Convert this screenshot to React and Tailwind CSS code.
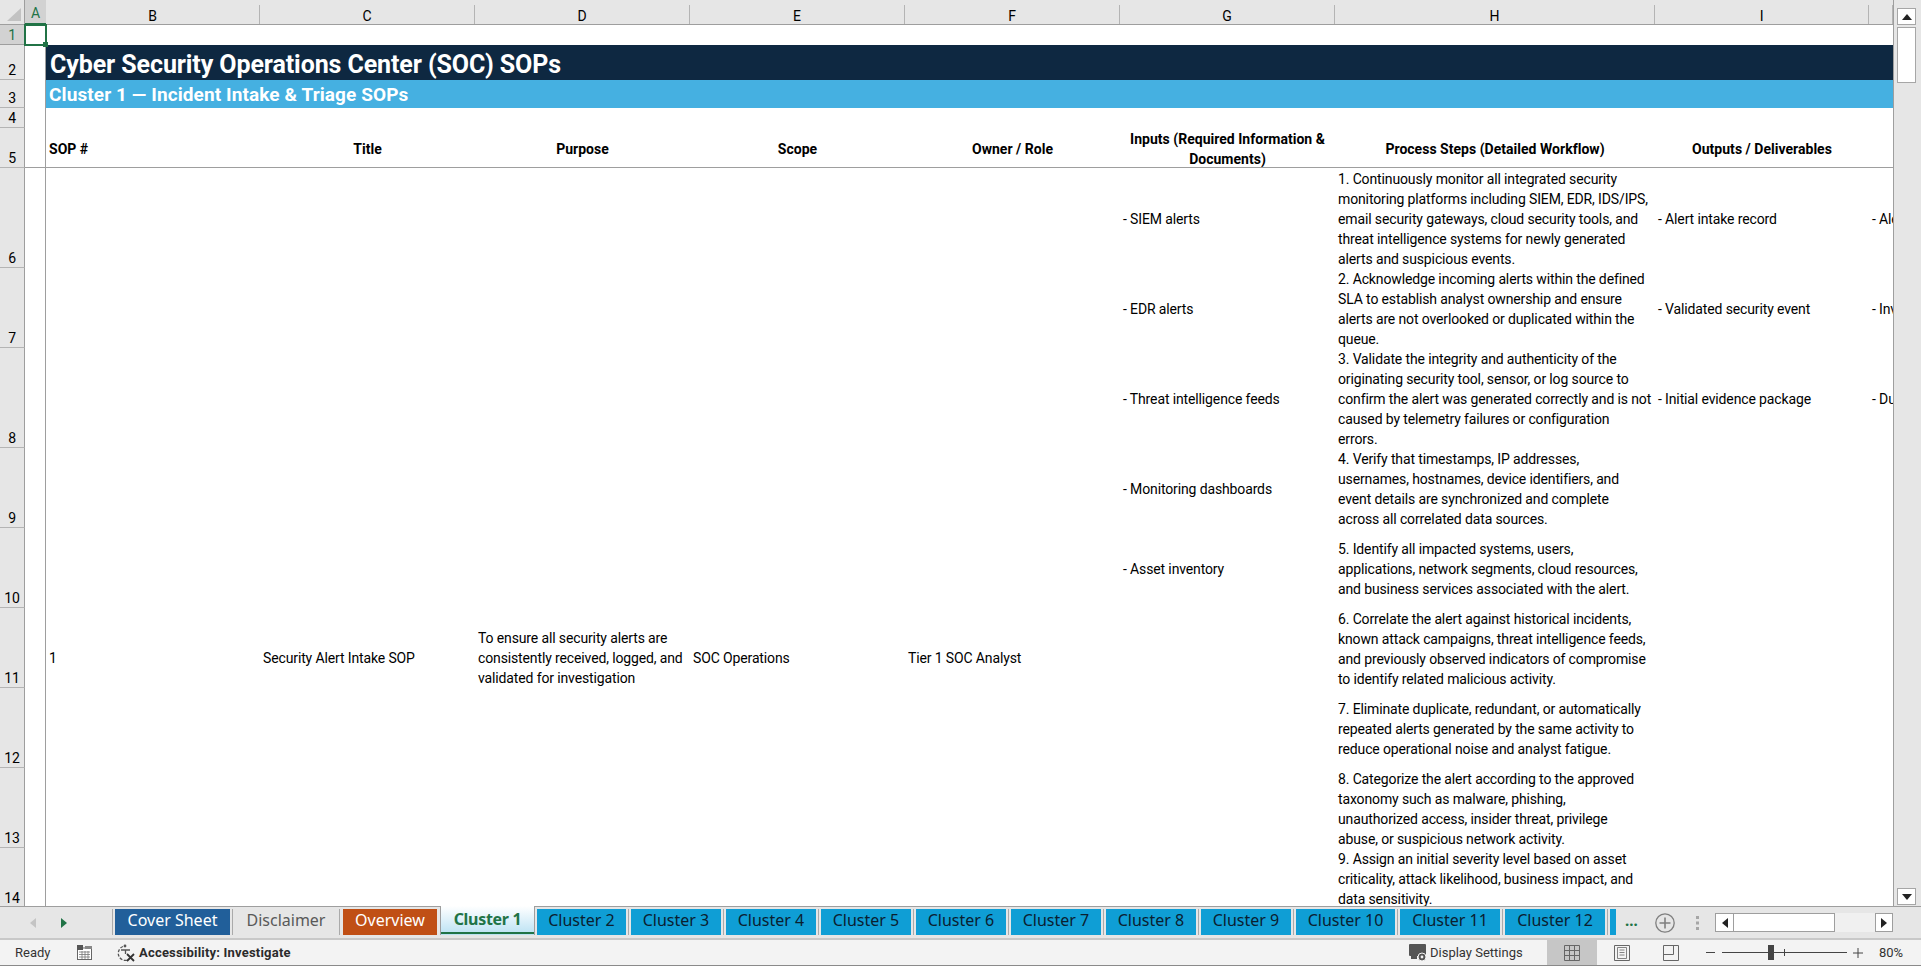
import React from 'react';

const CELL_FONT = "font-['Roboto',sans-serif] text-[14px] leading-[20px] tracking-[-0.13px] text-black";
const TAB_FONT = "font-['Noto_Sans',sans-serif] text-[16px] leading-[22px]";
const UI_FONT = "font-['Roboto',sans-serif] text-[13px]";

// Column header cells
const columns = [
  { label: 'B', col: 'col-start-3' },
  { label: 'C', col: 'col-start-4' },
  { label: 'D', col: 'col-start-5' },
  { label: 'E', col: 'col-start-6' },
  { label: 'F', col: 'col-start-7' },
  { label: 'G', col: 'col-start-8' },
  { label: 'H', col: 'col-start-9' },
  { label: 'I', col: 'col-start-10' },
  { label: '', col: 'col-start-11' },
];

// Row header cells
const rowLabels = [
  { label: '2', row: 'row-start-3' },
  { label: '3', row: 'row-start-4' },
  { label: '4', row: 'row-start-5' },
  { label: '5', row: 'row-start-6' },
  { label: '6', row: 'row-start-7' },
  { label: '7', row: 'row-start-8' },
  { label: '8', row: 'row-start-9' },
  { label: '9', row: 'row-start-10' },
  { label: '10', row: 'row-start-11' },
  { label: '11', row: 'row-start-12' },
  { label: '12', row: 'row-start-13' },
  { label: '13', row: 'row-start-14' },
  { label: '14', row: 'row-start-15' },
];

const headers = [
  { col: 'col-start-3', text: 'SOP #', align: 'text-left pl-[3px]' },
  { col: 'col-start-4', text: 'Title' },
  { col: 'col-start-5', text: 'Purpose' },
  { col: 'col-start-6', text: 'Scope' },
  { col: 'col-start-7', text: 'Owner / Role' },
  { col: 'col-start-8', text: 'Inputs (Required Information & Documents)' },
  { col: 'col-start-9', text: 'Process Steps (Detailed Workflow)' },
  { col: 'col-start-10', text: 'Outputs / Deliverables' },
  { col: 'col-start-11', text: '' },
];

const steps = [
  { row: 'row-start-7', lines: ['1. Continuously monitor all integrated security', 'monitoring platforms including SIEM, EDR, IDS/IPS,', 'email security gateways, cloud security tools, and', 'threat intelligence systems for newly generated', 'alerts and suspicious events.'] },
  { row: 'row-start-8', lines: ['2. Acknowledge incoming alerts within the defined', 'SLA to establish analyst ownership and ensure', 'alerts are not overlooked or duplicated within the', 'queue.'] },
  { row: 'row-start-9', lines: ['3. Validate the integrity and authenticity of the', 'originating security tool, sensor, or log source to', 'confirm the alert was generated correctly and is not', 'caused by telemetry failures or configuration', 'errors.'] },
  { row: 'row-start-10', lines: ['4. Verify that timestamps, IP addresses,', 'usernames, hostnames, device identifiers, and', 'event details are synchronized and complete', 'across all correlated data sources.'] },
  { row: 'row-start-11', lines: ['5. Identify all impacted systems, users,', 'applications, network segments, cloud resources,', 'and business services associated with the alert.'] },
  { row: 'row-start-12', lines: ['6. Correlate the alert against historical incidents,', 'known attack campaigns, threat intelligence feeds,', 'and previously observed indicators of compromise', 'to identify related malicious activity.'] },
  { row: 'row-start-13', lines: ['7. Eliminate duplicate, redundant, or automatically', 'repeated alerts generated by the same activity to', 'reduce operational noise and analyst fatigue.'] },
  { row: 'row-start-14', lines: ['8. Categorize the alert according to the approved', 'taxonomy such as malware, phishing,', 'unauthorized access, insider threat, privilege', 'abuse, or suspicious network activity.'] },
  { row: 'row-start-15', lines: ['9. Assign an initial severity level based on asset', 'criticality, attack likelihood, business impact, and', 'data sensitivity.'] },
];

const inputs = [
  { row: 'row-start-7', text: '- SIEM alerts' },
  { row: 'row-start-8', text: '- EDR alerts' },
  { row: 'row-start-9', text: '- Threat intelligence feeds' },
  { row: 'row-start-10', text: '- Monitoring dashboards' },
  { row: 'row-start-11', text: '- Asset inventory' },
];

const outputs = [
  { row: 'row-start-7', text: '- Alert intake record', next: '- Alert' },
  { row: 'row-start-8', text: '- Validated security event', next: '- Inv' },
  { row: 'row-start-9', text: '- Initial evidence package', next: '- Dup' },
];

const mergedCells = [
  { col: 'col-start-3', lines: ['1'] },
  { col: 'col-start-4', lines: ['Security Alert Intake SOP'] },
  { col: 'col-start-5', lines: ['To ensure all security alerts are', 'consistently received, logged, and', 'validated for investigation'] },
  { col: 'col-start-6', lines: ['SOC Operations'] },
  { col: 'col-start-7', lines: ['Tier 1 SOC Analyst'] },
];

const clusterTabs = [
  { name: 'Cluster 2', width: 'w-[94px]' },
  { name: 'Cluster 3', width: 'w-[95px]' },
  { name: 'Cluster 4', width: 'w-[95px]' },
  { name: 'Cluster 5', width: 'w-[95px]' },
  { name: 'Cluster 6', width: 'w-[95px]' },
  { name: 'Cluster 7', width: 'w-[95px]' },
  { name: 'Cluster 8', width: 'w-[95px]' },
  { name: 'Cluster 9', width: 'w-[95px]' },
  { name: 'Cluster 10', width: 'w-[104px]' },
  { name: 'Cluster 11', width: 'w-[105px]' },
  { name: 'Cluster 12', width: 'w-[105px]' },
];

const Sheet = () => (
  <div className="grid min-w-0 flex-1 grid-cols-[25px_21px_214px_215px_215px_215px_215px_215px_320px_214px_24px] grid-rows-[25px_20px_35px_28px_20px_40px_100px_80px_100px_80px_80px_80px_80px_80px_60px_240px] overflow-hidden">
    {/* Corner */}
    <div className="col-start-1 row-start-1 flex items-end justify-end border-r border-b border-[#9e9e9e] bg-[#e6e6e6] pr-[3px] pb-[3px]">
      <svg width="14" height="13" viewBox="0 0 14 13"><path d="M14 0V13H0Z" fill="#c2c2c2" /></svg>
    </div>

    {/* Column A header */}
    <div className="col-start-2 row-start-1 flex items-end border-b-2 border-[#217346] bg-[#e6e6e6]">
      <div className={`flex h-[23px] w-full items-center justify-center bg-[#d2d2d2] pt-[3px] ${CELL_FONT} text-[#217346]!`}>A</div>
    </div>

    {/* Column headers */}
    {columns.map(c => (
      <div key={c.col} className={`${c.col} row-start-1 flex items-end border-b border-[#9e9e9e] bg-[#e6e6e6]`}>
        <div className={`flex h-[19px] w-full items-center justify-center border-r border-[#b4b4b4] pt-[2px] ${CELL_FONT}`}>{c.label}</div>
      </div>
    ))}

    {/* Row 1 header and selected cell */}
    <div className={`col-start-1 row-start-2 flex items-end justify-center border-r border-b border-[#9e9e9e] bg-[#d2d2d2] ${CELL_FONT} leading-[18px]! text-[#217346]!`}>1</div>
    <div className="relative col-start-2 row-start-2">
      <div className="absolute -top-px -right-px -bottom-px -left-px z-10 border-2 border-[#217346]" />
      <div className="absolute -right-[2px] -bottom-[2px] z-20 h-[5px] w-[5px] bg-[#217346]" />
    </div>

    {/* Other row headers */}
    {rowLabels.map(r => (
      <div key={r.row} className={`col-start-1 ${r.row} flex items-end justify-center border-r border-b border-r-[#9e9e9e] border-b-[#b4b4b4] bg-[#e6e6e6] ${CELL_FONT} leading-[17px]!`}>{r.label}</div>
    ))}
    <div className="col-start-1 row-start-16 border-r border-[#9e9e9e] bg-[#e6e6e6]" />

    {/* Line between columns A and B */}
    <div className="col-start-2 row-start-3 row-span-3 border-r border-[#9e9e9e]" />
    <div className="col-start-2 row-start-6 border-r border-b border-[#9e9e9e]" />
    <div className="col-start-2 row-start-7 row-span-10 border-r border-[#9e9e9e]" />

    {/* Title bands */}
    <div className="col-start-3 col-end-12 row-start-3 flex items-center bg-[#0e2841] pt-[4px] pl-[4px]">
      <span className="font-['Roboto',sans-serif] text-[25px] font-bold tracking-[-0.1px] whitespace-nowrap text-white">Cyber Security Operations Center (SOC) SOPs</span>
    </div>
    <div className="col-start-3 col-end-12 row-start-4 flex items-center bg-[#45b0e1] pt-[2px] pl-[3px]">
      <span className="font-['Roboto',sans-serif] text-[19px] font-bold tracking-[0.1px] whitespace-nowrap text-white">Cluster 1 — Incident Intake &amp; Triage SOPs</span>
    </div>

    {/* Table header */}
    {headers.map(h => (
      <div key={h.col} className={`${h.col} row-start-6 flex items-center justify-center border-b border-[#9e9e9e] px-[3px] pt-[2px] ${CELL_FONT} font-bold tracking-[0.02px]! ${h.align || 'text-center'}`}>
        <span className="w-full">{h.text}</span>
      </div>
    ))}

    {/* Merged SOP cells */}
    {mergedCells.map(m => (
      <div key={m.col} className={`${m.col} row-start-7 row-span-10 flex flex-col justify-center pl-[3px] whitespace-nowrap ${CELL_FONT}`}>
        {m.lines.map(line => <div key={line}>{line}</div>)}
      </div>
    ))}

    {/* Inputs */}
    {inputs.map(i => (
      <div key={i.row} className={`col-start-8 ${i.row} flex items-center pt-[2px] pl-[3px] ${CELL_FONT}`}>{i.text}</div>
    ))}

    {/* Process steps */}
    {steps.map(s => (
      <div key={s.row} className={`col-start-9 ${s.row} flex flex-col justify-center pt-[2px] pl-[3px] whitespace-nowrap ${CELL_FONT}`}>
        {s.lines.map(line => <div key={line}>{line}</div>)}
      </div>
    ))}

    {/* Outputs and the cut-off next column */}
    {outputs.map(o => (
      <React.Fragment key={o.row}>
        <div className={`col-start-10 ${o.row} flex items-center pt-[2px] pl-[3px] ${CELL_FONT}`}>{o.text}</div>
        <div className={`col-start-11 ${o.row} flex items-center overflow-hidden pt-[2px] pl-[3px] whitespace-nowrap ${CELL_FONT}`}>{o.next}</div>
      </React.Fragment>
    ))}
  </div>
);

const VerticalScrollbar = () => (
  <div className="flex w-[28px] shrink-0 flex-col border-l border-[#9e9e9e] bg-[#e6e6e6] pt-[8px] pr-[5px] pb-[1px] pl-[3px]">
    <div className="flex h-[17px] items-center justify-center border border-[#a6a6a6] bg-white">
      <svg width="10" height="6" viewBox="0 0 10 6"><path d="M5 0L10 6H0Z" fill="#222" /></svg>
    </div>
    <div className="mt-[2px] h-[56px] border border-[#a6a6a6] bg-white" />
    <div className="flex-1" />
    <div className="flex h-[17px] items-center justify-center border border-[#a6a6a6] bg-white">
      <svg width="10" height="6" viewBox="0 0 10 6"><path d="M0 0H10L5 6Z" fill="#222" /></svg>
    </div>
  </div>
);

const TabBar = () => (
  <div className="flex h-[32px] shrink-0 items-start border-t border-[#9e9e9e] bg-[#e6e6e6]">
    {/* Sheet navigation arrows */}
    <div className="flex h-[28px] w-[112px] items-center pt-[3px] pl-[30px]">
      <svg width="6" height="10" viewBox="0 0 6 10"><path d="M6 0V10L0 5Z" fill="#c4c4c4" /></svg>
      <svg className="ml-[25px]" width="6" height="10" viewBox="0 0 6 10"><path d="M0 0V10L6 5Z" fill="#217346" /></svg>
    </div>

    <div className="mt-[2px] flex h-[26px] border-l border-[#aaaaaa]">
      <div className="flex w-[120px] border-r border-[#aaaaaa] pr-[2px] pl-[2px]">
        <div className={`w-full bg-[#215f9a] text-center text-white ${TAB_FONT}`}>Cover Sheet</div>
      </div>
      <div className={`w-[107px] border-r border-[#aaaaaa] text-center text-[#595959] ${TAB_FONT}`}>Disclaimer</div>
      <div className="flex w-[100px] pr-[3px] pl-[3px]">
        <div className={`w-full bg-[#c04f15] text-center text-white ${TAB_FONT}`}>Overview</div>
      </div>
    </div>

    {/* Active sheet tab */}
    <div className="-mt-px h-[29px] w-[95px] border-x border-[#9e9e9e] bg-gradient-to-b from-white to-[#b9e1f3]">
      <div className={`h-[28px] border-b-2 border-[#217346] pt-[2px] text-center font-bold text-[#217346] ${TAB_FONT} tracking-[-0.3px]`}>Cluster 1</div>
    </div>

    <div className="mt-[2px] flex h-[26px]">
      {clusterTabs.map(tab => (
        <div key={tab.name} className={`flex ${tab.width} border-r border-[#aaaaaa] pr-[2px] pl-[2px]`}>
          <div className={`w-full bg-[#0f9ed5] text-center text-[#0b2030] ${TAB_FONT}`}>{tab.name}</div>
        </div>
      ))}
      <div className="ml-[2px] w-[6px] bg-[#0f9ed5]" />
    </div>

    <div className="mt-[2px] ml-[9px] w-[16px] text-[15px] leading-[22px] font-bold text-[#217346]">...</div>

    {/* New sheet button */}
    <svg className="mt-[6px] ml-[14px]" width="20" height="20" viewBox="0 0 20 20" fill="none" stroke="#7f7f7f" strokeWidth="1.3">
      <circle cx="10" cy="10" r="9.2" />
      <path d="M10 4.5V15.5M4.5 10H15.5" strokeWidth="1.6" />
    </svg>

    <svg className="mt-[9px] ml-[21px]" width="3" height="14" viewBox="0 0 3 14" fill="#a6a6a6">
      <rect width="3" height="3" />
      <rect y="5.5" width="3" height="3" />
      <rect y="11" width="3" height="3" />
    </svg>

    {/* Horizontal scrollbar */}
    <div className="mt-[6px] ml-[16px] flex h-[19px] w-[178px]">
      <div className="flex w-[19px] items-center justify-center border border-[#9e9e9e] bg-white">
        <svg width="6" height="10" viewBox="0 0 6 10"><path d="M6 0V10L0 5Z" fill="#222" /></svg>
      </div>
      <div className="w-[101px] border-y border-r border-[#9e9e9e] bg-white" />
      <div className="flex-1 bg-[#f0f0f0]" />
      <div className="flex w-[18px] items-center justify-center border border-[#9e9e9e] bg-white">
        <svg width="6" height="10" viewBox="0 0 6 10"><path d="M0 0V10L6 5Z" fill="#222" /></svg>
      </div>
    </div>
  </div>
);

const StatusBar = () => (
  <div className={`flex h-[28px] shrink-0 items-center border-t-2 border-b border-t-[#c8c8c8] border-b-[#8a8a8a] bg-[#f3f3f3] text-[#333] ${UI_FONT}`}>
    <span className="ml-[15px] w-[62px]">Ready</span>

    <svg width="15" height="15" viewBox="0 0 15 15">
      <rect x="0.5" y="3" width="14" height="11.5" fill="#fff" stroke="#666" />
      <rect x="0" y="0" width="6" height="5" fill="#555" />
      <rect x="8" y="1" width="7" height="3" fill="#888" />
      <path d="M2 7H13M2 9.5H13M2 12H13M5 6V14M8 6V14M11 6V14" stroke="#777" strokeWidth="0.8" />
    </svg>

    <svg className="ml-[24px]" width="20" height="18" viewBox="0 0 20 18" fill="none" stroke="#555" strokeWidth="1.3">
      <path d="M7 2.5A7 7 0 1 0 12 16" strokeDasharray="3 1.5" />
      <circle cx="9" cy="2" r="1.4" fill="#555" stroke="none" />
      <path d="M5 6H14M9.5 6V10" />
      <path d="M11 10L18 17M18 10L11 17" stroke="#333" strokeWidth="1.8" />
    </svg>
    <span className="ml-[3px] font-bold tracking-[0.2px] text-[#2b2b2b]">Accessibility: Investigate</span>

    <div className="flex-1" />

    <svg width="19" height="20" viewBox="0 0 19 20">
      <rect x="0" y="1" width="17" height="12" rx="1" fill="#555" />
      <rect x="2" y="13" width="6" height="3" fill="#555" />
      <circle cx="13" cy="14" r="4" fill="#555" stroke="#f3f3f3" strokeWidth="1" />
      <circle cx="13" cy="14" r="1.4" fill="#f3f3f3" />
    </svg>
    <span className="ml-[2px] w-[117px] text-[#333]">Display Settings</span>

    {/* Sheet view buttons */}
    <div className="flex h-full w-[50px] items-center justify-center bg-[#c6c6c6]">
      <svg width="16" height="16" viewBox="0 0 16 16" fill="none" stroke="#666">
        <path d="M.5.5H15.5V15.5H.5ZM5.5.5V15.5M10.5.5V15.5M.5 5.5H15.5M.5 10.5H15.5" />
      </svg>
    </div>
    <svg className="ml-[17px]" width="16" height="16" viewBox="0 0 16 16" fill="none" stroke="#666">
      <path d="M.5.5H15.5V15.5H.5Z" />
      <path d="M3.5 2.5H12.5V13.5H3.5ZM5.5 5H10.5M5.5 7.5H10.5M5.5 10H10.5" strokeWidth="0.8" />
    </svg>
    <svg className="ml-[33px]" width="16" height="16" viewBox="0 0 16 16" fill="none" stroke="#666">
      <path d="M.5.5H15.5V15.5H.5ZM.5 9.5H10.5V.5" />
    </svg>

    {/* Zoom slider */}
    <div className="ml-[27px] h-px w-[9px] bg-[#444]" />
    <div className="relative ml-[7px] h-px w-[125px] bg-[#444]">
      <div className="absolute top-[-7px] left-[46px] h-[15px] w-[6px] bg-[#444]" />
      <div className="absolute top-[-3px] left-[62px] h-[7px] w-px bg-[#444]" />
    </div>
    <svg className="ml-[6px]" width="10" height="10" viewBox="0 0 10 10" stroke="#444"><path d="M5 0V10M0 5H10" /></svg>
    <span className="ml-[16px] w-[42px]">80%</span>
  </div>
);

export default function App() {
  return (
    <div className="flex h-screen w-screen flex-col overflow-hidden bg-white">
      <div className="flex min-h-0 flex-1">
        <Sheet />
        <VerticalScrollbar />
      </div>
      <TabBar />
      <StatusBar />
    </div>
  );
}
